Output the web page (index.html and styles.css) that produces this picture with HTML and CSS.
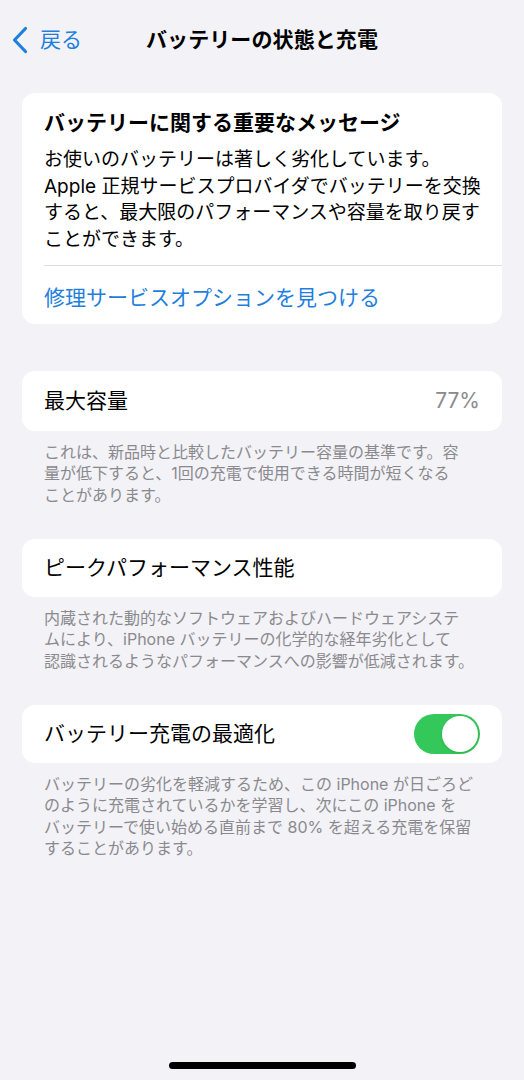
FILE: index.html
```html
<!DOCTYPE html>
<html lang="ja">
<head>
<meta charset="utf-8">
<title>バッテリーの状態と充電</title>
<link rel="stylesheet" href="styles.css">
</head>
<body>
<div class="page">
  <header class="nav">
    <div class="back">
      <svg class="chev" width="18" height="28" viewBox="0 0 18 28" aria-hidden="true">
        <polyline points="14.5,2.5 3.5,14 14.5,25.5" fill="none" stroke="currentColor" stroke-width="3.2" stroke-linecap="round" stroke-linejoin="round"/>
      </svg>
      <span>戻る</span>
    </div>
    <h1 class="nav-title">バッテリーの状態と充電</h1>
    <div></div>
  </header>

  <main class="content">
    <section class="card card-msg">
      <div class="msg">
        <h2 class="msg-title">バッテリーに関する重要なメッセージ</h2>
        <p class="msg-body">お使いのバッテリーは著しく劣化しています。<br>Apple 正規サービスプロバイダでバッテリーを交換<br>すると、最大限のパフォーマンスや容量を取り戻す<br>ことができます。</p>
      </div>
      <div class="link-row">修理サービスオプションを見つける</div>
    </section>

    <section class="card row row-first">
      <span class="label">最大容量</span>
      <span class="value">77%</span>
    </section>
    <p class="note">これは、新品時と比較したバッテリー容量の基準です。容<br>量が低下すると、1回の充電で使用できる時間が短くなる<br>ことがあります。</p>

    <section class="card row row-next">
      <span class="label">ピークパフォーマンス性能</span>
    </section>
    <p class="note">内蔵された動的なソフトウェアおよびハードウェアシステ<br>ムにより、iPhone バッテリーの化学的な経年劣化として<br>認識されるようなパフォーマンスへの影響が低減されます。</p>

    <section class="card row row-next">
      <span class="label">バッテリー充電の最適化</span>
      <span class="toggle"><span class="knob"></span></span>
    </section>
    <p class="note">バッテリーの劣化を軽減するため、この iPhone が日ごろど<br>のように充電されているかを学習し、次にこの iPhone を<br>バッテリーで使い始める直前まで 80% を超える充電を保留<br>することがあります。</p>
  </main>

  <div class="home-bar"></div>
</div>
</body>
</html>
```

FILE: styles.css
```css
* { box-sizing: border-box; }

html, body {
  margin: 0;
  padding: 0;
}

body {
  background: #f2f2f7;
  font-family: Inter, "Noto Sans CJK JP", "Noto Sans", sans-serif;
  color: #000;
}

.page {
  width: 524px;
  height: 1080px;
  display: flex;
  flex-direction: column;
}

.nav {
  height: 80px;
  flex: none;
  display: grid;
  grid-template-columns: 1fr auto 1fr;
  align-items: center;
}

.back {
  display: flex;
  align-items: center;
  padding-left: 11px;
  color: #1f7fdc;
  font-size: 21px;
  line-height: 28px;
}

.chev {
  display: block;
  margin-right: 11px;
}

.nav-title {
  margin: 0;
  font-size: 21px;
  line-height: 28px;
  font-weight: 700;
  letter-spacing: 0.1px;
}

.content {
  padding: 0 22px;
}

.card {
  background: #fff;
  border-radius: 13px;
}

.card-msg {
  margin-top: 13px;
}

.msg {
  padding: 16px 10px 12px 22px;
}

.msg-title {
  margin: 0;
  font-size: 21px;
  line-height: 28px;
  font-weight: 700;
  white-space: nowrap;
}

.msg-body {
  margin: 10px 0 0;
  font-size: 19px;
  line-height: 26.5px;
  white-space: nowrap;
}

.link-row {
  margin-left: 22px;
  height: 59px;
  border-top: 1px solid #dedee2;
  display: flex;
  align-items: center;
  padding-top: 2px;
  color: #1f7fdc;
  font-size: 21px;
}

.row {
  display: flex;
  align-items: center;
  justify-content: space-between;
  height: 58px;
  padding: 0 22px;
}

.row-first {
  margin-top: 47px;
  height: 60px;
}

.row-next {
  margin-top: 33px;
}

.label {
  font-size: 21px;
  line-height: 28px;
}

.value {
  font-size: 21px;
  line-height: 28px;
  color: #8a8a8e;
}

.toggle {
  width: 66px;
  height: 40px;
  border-radius: 20px;
  background: #34c759;
  display: flex;
  align-items: center;
  justify-content: flex-end;
  padding: 2px;
}

.knob {
  width: 36px;
  height: 36px;
  border-radius: 50%;
  background: #fff;
  box-shadow: 0 1px 3px rgba(0, 0, 0, 0.12);
}

.note {
  margin: 0;
  padding: 10.5px 10px 0 22px;
  font-size: 16px;
  line-height: 21.5px;
  color: #8a8a8e;
  white-space: nowrap;
}

.home-bar {
  margin: auto auto 11px;
  width: 187px;
  height: 7px;
  border-radius: 4px;
  background: #000;
}
```
